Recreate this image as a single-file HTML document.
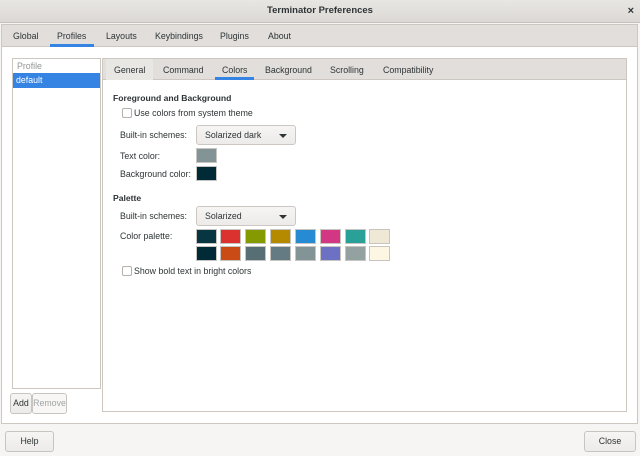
<!DOCTYPE html>
<html><head><style>
*{box-sizing:border-box;margin:0;padding:0}
body{width:640px;height:456px;background:#f6f5f4;font-family:"Liberation Sans",sans-serif;font-size:8.8px;color:#2e3436;position:relative;overflow:hidden}
.a{position:absolute}
.title{left:0;top:0;width:640px;height:23px;background:linear-gradient(#e8e6e3,#dcd9d5);border-bottom:1px solid #c5c1bc;text-align:center;font-weight:bold;line-height:22px;font-size:9.5px}
.sw{position:absolute;width:21px;height:15px;border:1px solid #c8c4c0}
.btn{position:absolute;border:1px solid #c8c4c0;border-radius:3px;background:linear-gradient(#f6f5f4,#edebe9);text-align:center;line-height:19px}
.cb{position:absolute;width:10px;height:10px;border:1px solid #b5b0aa;border-radius:2px;background:#fff}
.combo{position:absolute;left:196px;width:100px;height:20px;border:1px solid #cdc7c2;border-radius:3px;background:linear-gradient(#f6f5f4,#edebe9);padding-left:8px;line-height:19px}
.combo:after{content:"";position:absolute;right:8px;top:8px;border-left:4px solid transparent;border-right:4px solid transparent;border-top:4px solid #2e3436}
.b{font-weight:bold;font-size:8.6px}
</style></head><body>
<div class="a title">Terminator Preferences</div>
<div class="a" style="right:6px;top:5px;font-size:11px;font-weight:bold">×</div>
<div class="a" style="left:1px;top:24px;width:637px;height:400px;border:1px solid #cdc7c2;background:#fff"></div>
<div class="a" style="left:2px;top:25px;width:635px;height:22px;background:#e1dedb;border-bottom:1px solid #cdc7c2"></div>
<div class="a" style="top:31px;left:13px">Global</div>
<div class="a" style="top:31px;left:57px">Profiles</div>
<div class="a" style="left:50px;top:44px;width:44px;height:3px;background:#3584e4"></div>
<div class="a" style="top:31px;left:106px">Layouts</div>
<div class="a" style="top:31px;left:155px">Keybindings</div>
<div class="a" style="top:31px;left:220px">Plugins</div>
<div class="a" style="top:31px;left:268px">About</div>

<div class="a" style="left:12px;top:58px;width:89px;height:331px;border:1px solid #cdc7c2;background:#fff"></div>
<div class="a" style="left:17px;top:61px;color:#929595">Profile</div>
<div class="a" style="left:13px;top:73px;width:87px;height:15px;background:#3584e4"></div>
<div class="a" style="left:16px;top:75px;color:#fff">default</div>
<div class="btn" style="left:10px;top:393px;width:22px;height:21px">Add</div>
<div class="btn" style="left:32px;top:393px;width:35px;height:21px;color:#a0a4a4;background:#f8f7f6">Remove</div>

<div class="a" style="left:102px;top:58px;width:525px;height:354px;border:1px solid #cdc7c2;background:#fff"></div>
<div class="a" style="left:103px;top:59px;width:523px;height:21px;background:#e1dedb;border-bottom:1px solid #cdc7c2"></div>
<div class="a" style="left:106px;top:59px;width:47px;height:21px;background:#e9e7e4"></div>
<div class="a" style="top:65px;left:114px">General</div>
<div class="a" style="top:65px;left:163px">Command</div>
<div class="a" style="top:65px;left:222px">Colors</div>
<div class="a" style="left:215px;top:77px;width:39px;height:3px;background:#3584e4"></div>
<div class="a" style="top:65px;left:265px">Background</div>
<div class="a" style="top:65px;left:330px">Scrolling</div>
<div class="a" style="top:65px;left:383px">Compatibility</div>

<div class="a b" style="left:113px;top:93px">Foreground and Background</div>
<div class="cb" style="left:122px;top:108px"></div>
<div class="a" style="left:134px;top:108px">Use colors from system theme</div>
<div class="a" style="left:120px;top:130px">Built-in schemes:</div>
<div class="combo" style="top:125px">Solarized dark</div>
<div class="a" style="left:120px;top:151px">Text color:</div>
<div class="sw" style="left:196px;top:148px;background:#839496"></div>
<div class="a" style="left:120px;top:169px">Background color:</div>
<div class="sw" style="left:196px;top:166px;background:#002b36"></div>

<div class="a b" style="left:113px;top:193px">Palette</div>
<div class="a" style="left:120px;top:211px">Built-in schemes:</div>
<div class="combo" style="top:206px">Solarized</div>
<div class="a" style="left:120px;top:231px">Color palette:</div>
<div class="sw" style="left:196px;top:229px;background:#073642"></div>
<div class="sw" style="left:220px;top:229px;background:#dc322f"></div>
<div class="sw" style="left:245px;top:229px;background:#859900"></div>
<div class="sw" style="left:270px;top:229px;background:#b58900"></div>
<div class="sw" style="left:295px;top:229px;background:#268bd2"></div>
<div class="sw" style="left:320px;top:229px;background:#d33682"></div>
<div class="sw" style="left:345px;top:229px;background:#2aa198"></div>
<div class="sw" style="left:369px;top:229px;background:#eee8d5"></div>
<div class="sw" style="left:196px;top:246px;background:#002b36"></div>
<div class="sw" style="left:220px;top:246px;background:#cb4b16"></div>
<div class="sw" style="left:245px;top:246px;background:#586e75"></div>
<div class="sw" style="left:270px;top:246px;background:#657b83"></div>
<div class="sw" style="left:295px;top:246px;background:#839496"></div>
<div class="sw" style="left:320px;top:246px;background:#6c71c4"></div>
<div class="sw" style="left:345px;top:246px;background:#93a1a1"></div>
<div class="sw" style="left:369px;top:246px;background:#fdf6e3"></div>
<div class="cb" style="left:122px;top:266px"></div>
<div class="a" style="left:134px;top:266px">Show bold text in bright colors</div>

<div class="btn" style="left:5px;top:431px;width:49px;height:21px">Help</div>
<div class="btn" style="left:584px;top:431px;width:52px;height:21px">Close</div>
</body></html>
